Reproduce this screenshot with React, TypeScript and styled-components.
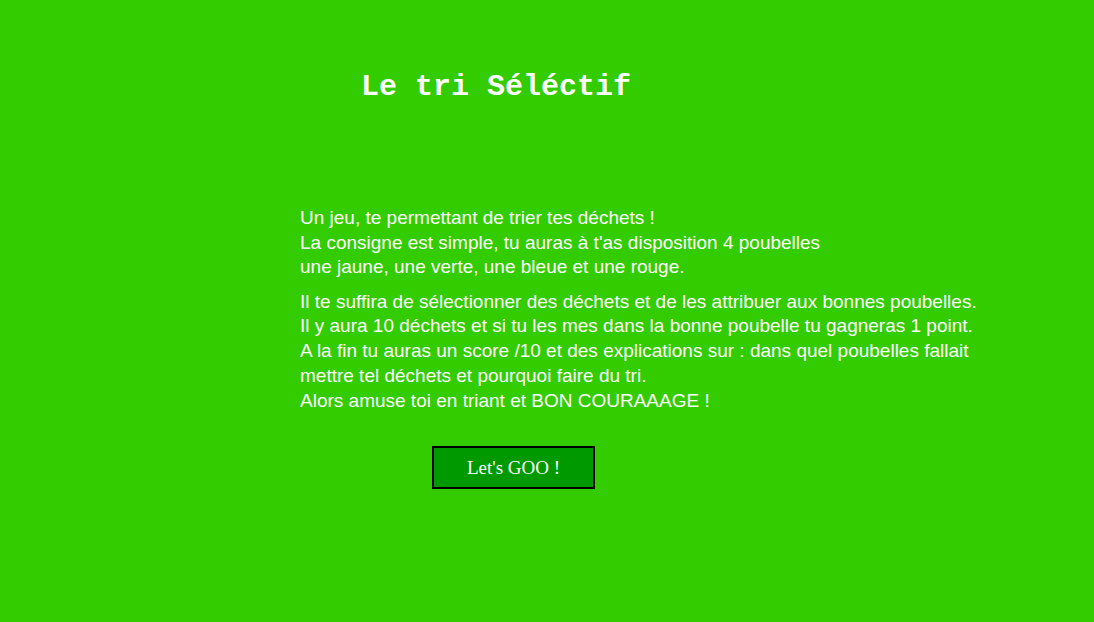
import React from "react";
import styled, { createGlobalStyle } from "styled-components";

const Global = createGlobalStyle`
  html, body { margin: 0; padding: 0; background: #33cc00; }
  body { width: 1094px; height: 622px; overflow: hidden; }
`;

const Page = styled.div`
  width: 1094px;
  height: 622px;
  background: #33cc00;
  color: #ffffff;
  display: flex;
  flex-direction: column;
`;

const Title = styled.h1`
  margin: 72px 0 0 361px;
  font-family: "Liberation Mono", "Courier New", monospace;
  font-weight: bold;
  font-size: 30px;
  line-height: 30px;
  color: #ffffff;
`;

const Intro = styled.div`
  margin: 104px 0 0 300px;
  display: flex;
  flex-direction: column;
  gap: 10px;
`;

const Para = styled.p<{ $lh: number }>`
  margin: 0;
  font-family: "Liberation Sans", Arial, sans-serif;
  font-size: 19px;
  line-height: ${(p) => p.$lh}px;
`;

const Line = styled.span`
  display: block;
  white-space: nowrap;
`;

const ButtonRow = styled.div`
  margin: 33px 0 0 432px;
`;

const Go = styled.button`
  width: 163px;
  height: 43px;
  background: #009900;
  border: 2px solid #000000;
  color: #ffffff;
  font-family: "Liberation Serif", "Times New Roman", serif;
  font-size: 19px;
  padding: 0;
  cursor: pointer;
`;

export default function App() {
  return (
    <>
      <Global />
      <Page>
        <Title>Le tri Séléctif</Title>
        <Intro>
          <Para $lh={24.5}>
            <Line>Un jeu, te permettant de trier tes déchets !</Line>
            <Line>La consigne est simple, tu auras à t'as disposition 4 poubelles</Line>
            <Line>une jaune, une verte, une bleue et une rouge.</Line>
          </Para>
          <Para $lh={24.75}>
            <Line>Il te suffira de sélectionner des déchets et de les attribuer aux bonnes poubelles.</Line>
            <Line>Il y aura 10 déchets et si tu les mes dans la bonne poubelle tu gagneras 1 point.</Line>
            <Line>A la fin tu auras un score /10 et des explications sur : dans quel poubelles fallait</Line>
            <Line>mettre tel déchets et pourquoi faire du tri.</Line>
            <Line>Alors amuse toi en triant et BON COURAAAGE !</Line>
          </Para>
        </Intro>
        <ButtonRow>
          <Go>Let's GOO !</Go>
        </ButtonRow>
      </Page>
    </>
  );
}
